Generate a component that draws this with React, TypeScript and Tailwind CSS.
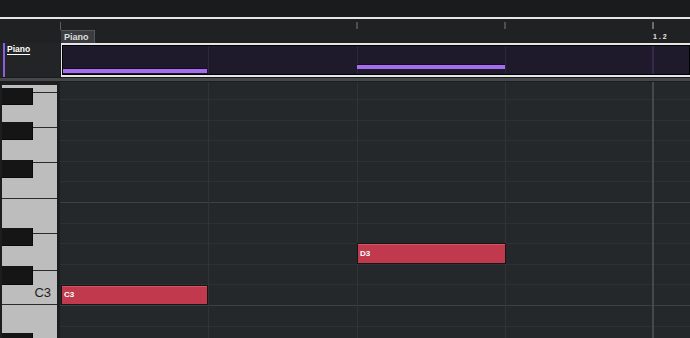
import React from "react";

// piano roll rows, top to bottom (first one is cut by the header)
const rows = [
  { note: "A#3", h: "h-[18px]", bright: false },
  { note: "A3", h: "h-[20.6px]", bright: false },
  { note: "G#3", h: "h-[20.6px]", bright: false },
  { note: "G3", h: "h-[20.6px]", bright: false },
  { note: "F#3", h: "h-[20.6px]", bright: false },
  { note: "F3", h: "h-[20.6px]", bright: true },
  { note: "E3", h: "h-[20.6px]", bright: false },
  { note: "D#3", h: "h-[20.6px]", bright: false },
  { note: "D3", h: "h-[20.6px]", bright: false },
  { note: "C#3", h: "h-[20.6px]", bright: false },
  { note: "C3", h: "h-[20.6px]", bright: true },
  { note: "B2", h: "h-[20.6px]", bright: false },
  { note: "A#2", h: "h-[20.6px]", bright: false },
  { note: "A2", h: "h-[20.6px]", bright: false },
];

const whiteKeys = [
  { note: "B3", h: "h-[8px]" },
  { note: "A3", h: "h-[35px]" },
  { note: "G3", h: "h-[35px]" },
  { note: "F3", h: "h-[36px]" },
  { note: "E3", h: "h-[35px]" },
  { note: "D3", h: "h-[37px]" },
  { note: "C3", h: "h-[34px]", label: true },
  { note: "B2", h: "h-[35px]" },
  { note: "A2", h: "h-[35px]" },
];

const blackKeys = [
  { note: "A#3", pos: "top-[3px] h-[17px]" },
  { note: "G#3", pos: "top-[37px] h-[18px]" },
  { note: "F#3", pos: "top-[75px] h-[18px]" },
  { note: "D#3", pos: "top-[143px] h-[18px]" },
  { note: "C#3", pos: "top-[181px] h-[19px]" },
  { note: "A#2", pos: "top-[248px] h-[18px]" },
];

const Keyboard: React.FC = () => (
  <div className="w-[60px] shrink-0 bg-[#1c1d1f] pl-[2px] pr-[3px] pt-[3px]">
    <div className="relative h-full">
      <div className="flex flex-col">
        {whiteKeys.map((k) => (
          <div
            key={k.note}
            className={`${k.h} bg-[#bdbdbd] border-b border-[#2b2b2b] flex items-end justify-end pr-[6px] pb-[5px]`}
          >
            {k.label && (
              <span className="text-[13px] leading-none text-[#1d1d1d]">
                C3
              </span>
            )}
          </div>
        ))}
      </div>
      {blackKeys.map((k) => (
        <div
          key={k.note}
          className={`absolute left-0 w-[31px] ${k.pos} bg-[#151515] border-r border-b border-[#0a0a0a]`}
        />
      ))}
    </div>
  </div>
);

const Grid: React.FC = () => (
  <div className="relative flex-1 bg-[#25282b] overflow-hidden">
    <div className="flex flex-col">
      {rows.map((r) => (
        <div
          key={r.note}
          className={`${r.h} shrink-0 border-b ${
            r.bright ? "border-[#3d4044]" : "border-[#2d3034]"
          }`}
        />
      ))}
    </div>

    {/* beat / sixteenth lines */}
    <div className="absolute inset-0 flex">
      <div className="w-[148px] shrink-0" />
      <div className="w-[149px] shrink-0 border-l border-[#303337]" />
      <div className="w-[148px] shrink-0 border-l border-[#303337]" />
      <div className="w-[147px] shrink-0 border-l border-[#303337]" />
      <div className="flex-1 border-l-2 border-[#45484c]" />
    </div>

    {/* notes */}
    <div className="absolute left-[1px] top-[203px] w-[147px] h-[20px] bg-[#c0394d] border border-[#161616] shadow-[inset_0_1px_0_#d2566a] flex items-center pl-[2px]">
      <span className="text-[8px] font-bold text-white leading-none">C3</span>
    </div>
    <div className="absolute left-[297px] top-[161px] w-[149px] h-[21px] bg-[#c0394d] border border-[#161616] shadow-[inset_0_1px_0_#d2566a] flex items-center pl-[2px]">
      <span className="text-[8px] font-bold text-white leading-none">D3</span>
    </div>
  </div>
);

const App: React.FC = () => {
  return (
    <div className="w-[690px] h-[338px] overflow-hidden bg-[#1a1b1d] flex flex-col font-['Liberation_Sans',Arial,sans-serif]">
      <div className="h-[17px] shrink-0 bg-[#1a1b1d]" />
      <div className="h-[2px] shrink-0 bg-[#e6e6e6]" />

      {/* Ruler */}
      <div className="h-[24px] shrink-0 flex bg-[#1f2123]">
        <div className="w-[60px] shrink-0" />
        <div className="relative flex-1 flex items-end">
          <div className="absolute left-0 top-[3px] w-px h-[8px] bg-[#5d5f62]" />
          <div className="absolute left-[296px] top-[3px] w-[2px] h-[7px] bg-[#4d4f52]" />
          <div className="absolute left-[444px] top-[3px] w-[2px] h-[7px] bg-[#4d4f52]" />
          <div className="absolute left-[592px] top-[3px] w-[2px] h-[7px] bg-[#6a6c6f]" />
          <span className="absolute left-[593px] top-[14px] text-[7px] font-bold tracking-[2px] text-[#e6e6e6] leading-none">
            1.2
          </span>
          <div className="ml-px h-[13px] w-[34px] bg-[#3a3c3f] border-t border-r border-[#55575a] flex items-center pl-[3px]">
            <span className="text-[9px] font-bold text-[#dedede] leading-none">
              Piano
            </span>
          </div>
        </div>
      </div>

      {/* Track row */}
      <div className="h-[34px] shrink-0 flex bg-[#1f2123]">
        <div className="w-[60px] shrink-0 bg-[#222426] flex pl-[3px]">
          <div className="w-[2px] h-full bg-[#8f5ce0]" />
          <span className="ml-[2px] mt-[2px] text-[8.5px] font-bold text-white underline underline-offset-[2px] leading-[9px]">
            Piano
          </span>
        </div>
        <div className="w-px shrink-0 bg-[#1a1b1d]" />
        <div className="flex-1 border-y-2 border-l border-[#e6e6e6]">
          <div className="relative h-full border border-black bg-[#1e1a2b]">
            <div className="absolute left-[145px] top-0 bottom-0 w-px bg-[#2d2640]" />
            <div className="absolute left-[294px] top-0 bottom-0 w-px bg-[#2d2640]" />
            <div className="absolute left-[442px] top-0 bottom-0 w-px bg-[#2d2640]" />
            <div className="absolute left-[589px] top-0 bottom-0 w-[2px] bg-[#332b48]" />
            <div className="absolute left-0 top-[22px] w-[144px] h-[5px] bg-[#a66cf0] border-t border-[#120f1a]" />
            <div className="absolute left-[294px] top-[18px] w-[148px] h-[5px] bg-[#a66cf0] border-t border-[#120f1a]" />
          </div>
        </div>
      </div>

      {/* divider */}
      <div className="h-px shrink-0 bg-[#1a1b1d]" />
      <div className="h-[3px] shrink-0 bg-[#45474a]" />
      <div className="h-px shrink-0 bg-[#1c1d1f]" />

      {/* Piano roll */}
      <div className="flex-1 flex min-h-0">
        <Keyboard />
        <Grid />
      </div>
    </div>
  );
};

export default App;
